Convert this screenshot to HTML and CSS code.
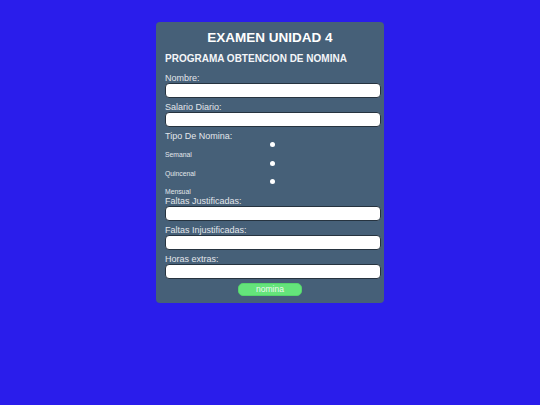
FILE: index.html
```html
<!DOCTYPE html>
<html lang="es">
<head>
<meta charset="utf-8">
<title>Examen Unidad 4</title>
<link rel="stylesheet" href="styles.css">
</head>
<body>
<form class="card">
  <h1 class="title">EXAMEN UNIDAD 4</h1>
  <h2 class="subtitle">PROGRAMA OBTENCION DE NOMINA</h2>
  <label class="lbl" for="nombre">Nombre:</label>
  <input class="field" id="nombre" type="text">
  <label class="lbl" for="salario">Salario Diario:</label>
  <input class="field" id="salario" type="text">
  <label class="lbl">Tipo De Nomina:</label>
  <input class="radio" type="radio" name="tipo" id="sem">
  <label class="opt" for="sem">Semanal</label>
  <input class="radio" type="radio" name="tipo" id="qui">
  <label class="opt" for="qui">Quincenal</label>
  <input class="radio" type="radio" name="tipo" id="men">
  <label class="opt" for="men">Mensual</label>
  <label class="lbl" for="fj">Faltas Justificadas:</label>
  <input class="field" id="fj" type="text">
  <label class="lbl" for="fi">Faltas Injustificadas:</label>
  <input class="field" id="fi" type="text">
  <label class="lbl" for="he">Horas extras:</label>
  <input class="field" id="he" type="text">
  <button class="btn" type="button">nomina</button>
</form>
</body>
</html>
```
FILE: styles.css
```css
html, body {
  margin: 0;
  padding: 0;
  background: #2a1deb;
  font-family: "Liberation Sans", Arial, sans-serif;
}
.card {
  width: 228px;
  height: 281px;
  box-sizing: border-box;
  margin: 22px auto 0;
  padding: 8px 3px 0 9px;
  background: #466078;
  border-radius: 4px;
  display: flex;
  flex-direction: column;
}
.title {
  margin: 0 0 7px -6px;
  font-size: 13.5px;
  line-height: 16px;
  font-weight: bold;
  color: #ffffff;
  text-align: center;
}
.subtitle {
  margin: 0 0 8px;
  font-size: 10px;
  line-height: 12px;
  font-weight: bold;
  color: #f4f6f8;
}
.lbl {
  display: block;
  font-size: 9px;
  line-height: 10px;
  color: #e2e6ea;
}
.field {
  display: block;
  width: 216px;
  height: 15px;
  box-sizing: border-box;
  margin: 0 0 4px;
  padding: 0 4px;
  border: 1px solid #26333f;
  border-radius: 4px;
  background: #ffffff;
  outline: none;
}
.radio {
  appearance: none;
  -webkit-appearance: none;
  display: block;
  width: 5px;
  height: 5px;
  margin: 1.3px 0 4.2px 105px;
  padding: 0;
  border: none;
  border-radius: 50%;
  background: #ffffff;
}
.opt {
  display: block;
  font-size: 6.8px;
  line-height: 8px;
  color: #e2e6ea;
}
.btn {
  align-self: center;
  margin: 0 0 0 -6px;
  width: 64px;
  height: 13px;
  padding: 0;
  border: 1px solid #55d46c;
  border-radius: 5px;
  background: #64e47b;
  color: #eef8f0;
  font-family: "Liberation Sans", Arial, sans-serif;
  font-size: 8.5px;
  line-height: 11px;
}
```
